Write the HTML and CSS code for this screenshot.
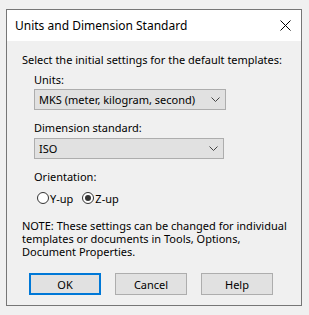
FILE: index.html
```html
<!DOCTYPE html>
<html>
<head>
<meta charset="utf-8">
<link rel="stylesheet" href="styles.css">
</head>
<body>
<div class="dialog">
  <div class="titlebar">
    <span class="title">Units and Dimension Standard</span>
    <svg class="close" width="11" height="11" viewBox="0 0 11 11"><path d="M0.5 0.5 L10.5 10.5 M10.5 0.5 L0.5 10.5" stroke="#000" stroke-width="1" fill="none"/></svg>
  </div>
  <div class="content">
    <div class="intro">Select the initial settings for the default templates:</div>
    <div class="group">
      <div class="label first">Units:</div>
      <div class="combo wide"><span>MKS (meter, kilogram, second)</span>
        <svg class="chev" width="9" height="5" viewBox="0 0 9 5"><path d="M0.5 0.5 L4.5 4.5 L8.5 0.5" stroke="#444" fill="none"/></svg></div>
      <div class="label">Dimension standard:</div>
      <div class="combo narrow"><span>ISO</span>
        <svg class="chev" width="9" height="5" viewBox="0 0 9 5"><path d="M0.5 0.5 L4.5 4.5 L8.5 0.5" stroke="#444" fill="none"/></svg></div>
      <div class="label">Orientation:</div>
      <div class="radios">
        <span class="radio"></span><span class="rtext">Y-up</span>
        <span class="radio checked"></span><span class="rtext">Z-up</span>
      </div>
    </div>
    <div class="note">
      <div class="nline">NOTE: These settings can be changed for individual</div>
      <div class="nline">templates or documents in Tools, Options,</div>
      <div class="nline">Document Properties.</div>
    </div>
    <div class="buttons">
      <div class="btn default">OK</div>
      <div class="btn">Cancel</div>
      <div class="btn">Help</div>
    </div>
  </div>
</div>
</body>
</html>
```
FILE: styles.css
```css
* { box-sizing: border-box; }
html, body {
  margin: 0;
  padding: 0;
  background: #f0f0f0;
  font-family: "Noto Sans", "Liberation Sans", sans-serif;
  font-size: 11px;
  color: #000;
}
.dialog {
  margin: 9px 0 0 6px;
  width: 296px;
  height: 297px;
  border: 1px solid #767676;
  background: #f0f0f0;
}
.titlebar {
  height: 31px;
  background: #fff;
  display: flex;
  align-items: center;
  justify-content: space-between;
  padding: 0 10px 0 8px;
}
.title {
  font-size: 12px;
}
.content {
  padding: 11px 0 0 15px;
  white-space: nowrap;
}
.intro {
  line-height: 16px;
}
.group {
  padding-left: 12px;
}
.label {
  line-height: 16px;
  margin-top: 10px;
}
.label.first {
  margin-top: 4px;
}
.combo {
  height: 21px;
  border: 1px solid #adadad;
  background: #e1e1e1;
  display: flex;
  align-items: center;
  justify-content: space-between;
  padding: 0 5px 0 4px;
  margin-top: 1px;
}
.combo.wide { width: 192px; }
.combo.narrow { width: 190px; margin-top: 2px; }
.radios {
  display: flex;
  align-items: center;
  margin-top: 5px;
  height: 16px;
  margin-left: 3px;
}
.radio {
  width: 12px;
  height: 12px;
  border: 1px solid #333;
  border-radius: 50%;
  background: #fff;
  position: relative;
  flex: none;
}
.radio.checked::after {
  content: "";
  position: absolute;
  left: 2px;
  top: 2px;
  width: 6px;
  height: 6px;
  border-radius: 50%;
  background: #333;
}
.rtext {
  margin-left: 1px;
  margin-right: 9px;
}
.note {
  margin-top: 13px;
}
.nline {
  height: 13px;
  line-height: 13px;
}
.buttons {
  display: flex;
  gap: 14px;
  margin-top: 15px;
  margin-left: 7px;
}
.btn {
  width: 72px;
  height: 22px;
  border: 1px solid #adadad;
  background: #e1e1e1;
  display: flex;
  align-items: center;
  justify-content: center;
}
.btn.default {
  border: 2px solid #0078d7;
}
```
